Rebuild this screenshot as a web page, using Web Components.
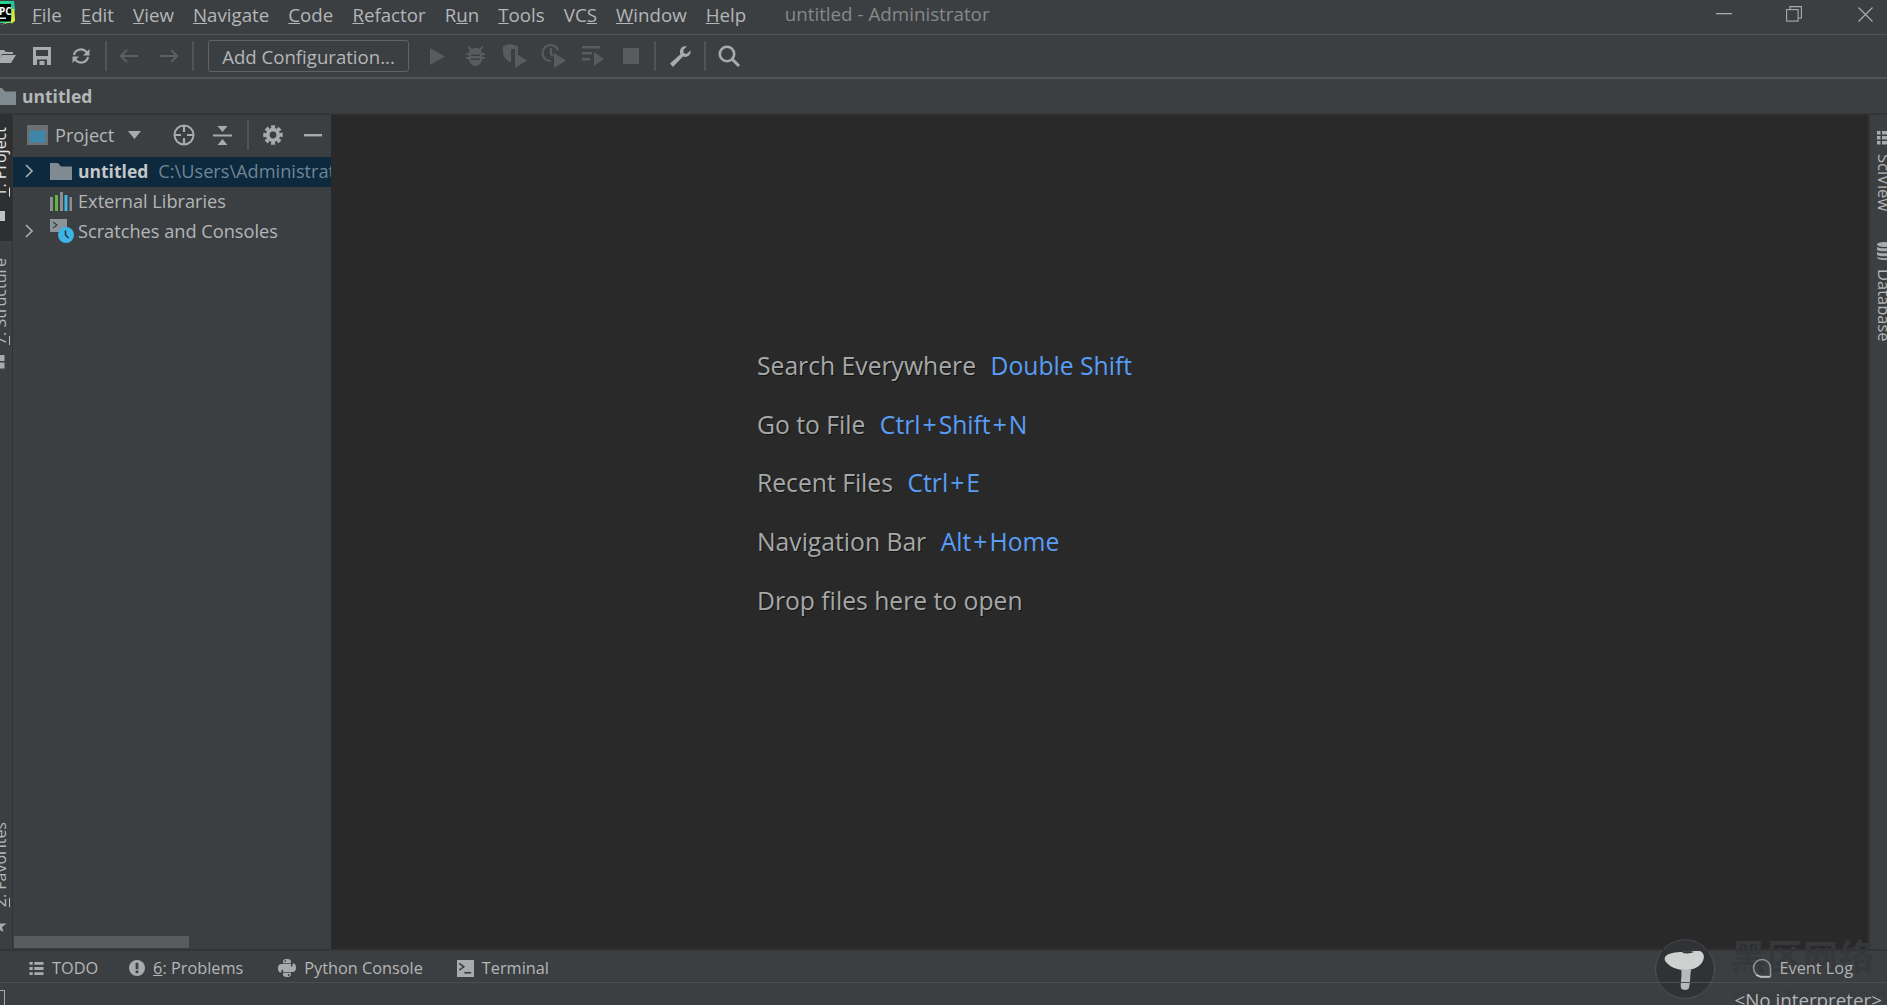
<!DOCTYPE html>
<html lang="en"><head><meta charset="utf-8"><title>untitled - Administrator</title>
<style>html,body{margin:0;padding:0;background:#3c3f41;overflow:hidden}</style></head>
<body>
<ide-app></ide-app>
<script>
const ICONS={
 logo:`<svg viewBox="0 0 16 26" width="16" height="26"><path d="M0 0h13l1 4v16l-3 2H0z" fill="#21d789"/><path d="M9 0h5l1 8-3 2z" fill="#27c2a0"/><path d="M0 24l15-4-1-9-3 9z" fill="#fcf84a"/><path d="M12 8l2.500 0 0 12-3 3z" fill="#d4e93a"/><rect x="-2" y="3" width="13" height="17.500" fill="#000"/><rect x="0" y="16.500" width="6" height="1.400" fill="#fff"/><text x="-1" y="14" font-family="Open Sans" font-weight="700" font-size="10" fill="#fff">PC</text></svg>`,
 open:`<svg viewBox="0 0 16 15" width="16" height="15"><path d="M-4 1h8l2 2h7v2H2L-2 14h-2z" fill="#a8aaac"/><path d="M-4 14L2 6h14l-5 8z" fill="#a8aaac"/></svg>`,
 save:`<svg viewBox="0 0 18 18" width="18" height="18"><path fill-rule="evenodd" fill="#a8aaac" d="M0 0h18v18H0zM3 3v6h12V3zM4 12.500v5.500h10v-5.500z"/><rect x="6.500" y="14" width="5" height="4" fill="#a8aaac"/></svg>`,
 sync:`<svg viewBox="0 0 18 18" width="18" height="18" fill="none" stroke="#a8aaac" stroke-width="2.200"><path d="M2 8a7 6.500 0 0 1 12-3.500L15.500 7"/><path d="M16 10a7 6.500 0 0 1-12 3.500L2.500 11"/><path d="M17.500 2v6.500H11z" fill="#a8aaac" stroke="none"/><path d="M.5 16v-6.500H7z" fill="#a8aaac" stroke="none"/></svg>`,
 back:`<svg viewBox="0 0 20 14" width="20" height="14" fill="none" stroke="#5d5f61" stroke-width="2"><path d="M19 7H2M8 1L2 7l6 6"/></svg>`,
 fwd:`<svg viewBox="0 0 20 14" width="20" height="14" fill="none" stroke="#5d5f61" stroke-width="2"><path d="M1 7h17M12 1l6 6-6 6"/></svg>`,
 play:`<svg viewBox="0 0 15 17" width="15" height="17"><path d="M0 0l15 8.500L0 17z" fill="#595b5d"/></svg>`,
 debug:`<svg viewBox="0 0 19 20" width="19" height="20"><path fill="#595b5d" d="M3 0l3 3a6 6 0 0 1 7 0l3-3 1.500 1.500L15 4.500c.6.7 1 1.500 1.200 2.500H19v2h-2.800v2H19v2h-2.800C15.500 17 13 20 9.500 20S3.500 17 2.800 13H0v-2h2.800V9H0V7h2.800C3 6 3.400 5.200 4 4.500L1.500 1.500z"/><path fill="#3c3f41" d="M5 8.500h9v1.600H5zM5 12.500h9v1.600H5z"/></svg>`,
 cover:`<svg viewBox="0 0 24 24" width="24" height="24"><path fill="#595b5d" d="M0 2l7-2 8 2v8h-3V5H8v13.500C3 16 0 13 0 8z"/><path fill="#595b5d" d="M12 9l12 7.500L12 24z"/></svg>`,
 profile:`<svg viewBox="0 0 24 24" width="24" height="24"><path fill="none" stroke="#595b5d" stroke-width="2.200" d="M9 17A8 8 0 1 1 16 6M9 4v6l2 2"/><path fill="#595b5d" d="M12 9l12 7.500L12 24z"/></svg>`,
 conc:`<svg viewBox="0 0 22 20" width="22" height="20"><path fill="#595b5d" d="M0 0h18v2.500H0zM0 6h10v2.500H0zM0 12h8v2.500H0zM12 6l10 7-10 7z"/></svg>`,
 stop:`<svg viewBox="0 0 16 16" width="16" height="16"><rect width="16" height="16" fill="#595b5d"/></svg>`,
 wrench:`<svg viewBox="0 0 21 21" width="21" height="21"><path fill="#a8aaac" d="M20.500 4.500l-4 3.500-3-1V3.500L17 .6C13.500-.8 9.500 2 10 6.500c0 .7.2 1.200.4 1.800L0 17.500 3 21l10-10.500c.7.3 1.500.4 2.300.4 3.400-.2 6-3.200 5.200-6.400z"/></svg>`,
 search:`<svg viewBox="0 0 22 22" width="22" height="22" fill="none" stroke="#a8aaac" stroke-width="2.600"><circle cx="9" cy="9" r="7.200"/><path d="M14 14l7 7" stroke-width="3"/></svg>`,
 folder:`<svg viewBox="0 0 22 17" width="22" height="17"><path fill="#7f8b91" d="M0 0h8l3 3.500h11V17H0z"/></svg>`,
 folderNav:`<svg viewBox="0 0 22 17" width="22" height="17"><path fill="#7f8b91" d="M0 0h8l3 3.500h11V17H0z"/></svg>`,
 project:`<svg viewBox="0 0 21 20" width="21" height="20"><rect width="21" height="20" fill="#6c7072"/><rect x="2.500" y="5.500" width="16" height="12" fill="#3f87a8"/></svg>`,
 caret:`<svg viewBox="0 0 13 8" width="13" height="8"><path d="M0 0h13L6.500 8z" fill="#a8aaac"/></svg>`,
 target:`<svg viewBox="0 0 22 22" width="22" height="22" fill="none" stroke="#a8aaac" stroke-width="2"><circle cx="11" cy="11" r="9.500"/><path d="M11 1v7M11 14v7M1 11h7M14 11h7" stroke-width="2.200"/></svg>`,
 collapse:`<svg viewBox="0 0 19 19" width="19" height="19"><path fill="#a8aaac" d="M4.500 0h10L9.500 6zM4.500 19h10l-5-6zM0 8.500h19v2H0z"/></svg>`,
 gear:`<svg viewBox="0 0 20 20" width="20" height="20" fill="none" stroke="#a8aaac"><circle cx="10" cy="10" r="5.300" stroke-width="3.800"/><circle cx="10" cy="10" r="8.300" stroke-width="3" stroke-dasharray="4 2.520" transform="rotate(-15 10 10)"/></svg>`,
 minus:`<svg viewBox="0 0 18 3" width="18" height="3"><rect width="18" height="2.400" fill="#a8aaac"/></svg>`,
 chev:`<svg viewBox="0 0 9 14" width="9" height="14" fill="none" stroke="#a8aaac" stroke-width="1.700"><path d="M1 1l6 6-6 6"/></svg>`,
 libs:`<svg viewBox="0 0 22 19" width="22" height="19"><rect x="0" y="5" width="3" height="14" fill="#8a8f92"/><rect x="5" y="3" width="3" height="16" fill="#62b543"/><rect x="10" y="0" width="3" height="19" fill="#8a8f92"/><rect x="14.500" y="3" width="3" height="16" fill="#40b6e0"/><rect x="19.500" y="5" width="2.500" height="14" fill="#8a8f92"/></svg>`,
 scratch:`<svg viewBox="0 0 24 24" width="24" height="24"><path fill="#8a9499" d="M0 0h17v13H0z"/><path d="M3 3l4 3-4 3" fill="none" stroke="#3c3f41" stroke-width="1.300"/><circle cx="16" cy="16" r="8" fill="#3cb4e6"/><path d="M15.500 11.500V16l3 3" fill="none" stroke="#2b2b2b" stroke-width="1.500"/></svg>`,
 todo:`<svg viewBox="0 0 13 12" width="15" height="13"><path fill="#a8aaac" d="M0 0h3v2.600H0zM4.500 0H13v2.600H4.500zM0 4.700h3v2.600H0zM4.500 4.700H13v2.600H4.500zM0 9.400h3V12H0zM4.500 9.400H13V12H4.500z"/></svg>`,
 problem:`<svg viewBox="0 0 14 14" width="16" height="16"><circle cx="7" cy="7" r="7" fill="#a8aaac"/><rect x="5.800" y="2.500" width="2.400" height="5.500" fill="#3c3f41"/><rect x="5.800" y="9.200" width="2.400" height="2.300" fill="#3c3f41"/></svg>`,
 python:`<svg viewBox="0 0 16 16" width="18" height="18"><path fill="#a8aaac" d="M3 3.700h8.500V2C11.500.6 10 0 8 0S4.500.5 4.500 2v1.700zM0 8c0-2 1-3.500 3-3.500h8.500V7C11.500 8 11 9 9.500 9H5c-1.500 0-2 1-2 2v1H2C.5 12 0 10 0 8z"/><path fill="#a8aaac" d="M13 12.300H4.500V14c0 1.400 1.500 2 3.500 2s3.500-.5 3.500-2v-1.700zM16 8c0 2-1 3.500-3 3.500H4.500V9C4.500 8 5 7 6.500 7H11c1.500 0 2-1 2-2V4h1c1.500 0 2 2 2 4z"/><circle cx="6.500" cy="1.800" r=".8" fill="#3c3f41"/><circle cx="9.500" cy="14.200" r=".8" fill="#3c3f41"/></svg>`,
 terminal:`<svg viewBox="0 0 15 15" width="17" height="17"><rect width="15" height="15" fill="#a8aaac"/><path d="M2 3l4 3-4 3" fill="none" stroke="#3c3f41" stroke-width="1.400"/><rect x="6.500" y="10.500" width="6" height="1.500" fill="#3c3f41"/></svg>`,
 sci:`<svg viewBox="0 0 14 14" width="14" height="14"><path fill="#a8aaac" d="M0 0h3.500v3.500H0zM5 0h9v3.500H5zM0 5h3.500v3.500H0zM5 5h9v3.500H5zM0 10h3.500v3.500H0zM5 10h9v3.500H5z"/></svg>`,
 db:`<svg viewBox="0 0 14 18" width="14" height="18" fill="#a8aaac"><ellipse cx="7" cy="2.500" rx="7" ry="2.500"/><path d="M0 5c2 1.800 12 1.800 14 0v3c-2 1.800-12 1.800-14 0zM0 10c2 1.800 12 1.800 14 0v3c-2 1.800-12 1.800-14 0zM0 15c2 1.500 12 1.500 14 0c0 2-3 3-7 3s-7-1-7-3z"/></svg>`,
 projStripe:`<svg viewBox="0 0 12 10" width="12" height="10"><rect x="-6" y="0" width="11" height="10" fill="#c0c2c4"/></svg>`,
 structStripe:`<svg viewBox="0 0 12 14" width="12" height="14"><path fill="#a8aaac" d="M-6 0H4.500v6H-6zM-6 7.500H4.500v6H-6z"/></svg>`,
 star:`<svg viewBox="0 0 12 12" width="12" height="12"><path fill="#a8aaac" d="M-3 0l1 3.500L6.500 3.500 2 7l1.500 5L-2 9z"/></svg>`,
 winMin:`<svg viewBox="0 0 16 2" width="16" height="2"><rect width="16" height="1.300" fill="#a8aaac"/></svg>`,
 winRes:`<svg viewBox="0 0 16 16" width="16" height="16" fill="none" stroke="#a8aaac" stroke-width="1.100"><rect x=".6" y="3.600" width="11.500" height="11.500"/><path d="M4 3.500V.6h11.400V12H12.300"/></svg>`,
 winClose:`<svg viewBox="0 0 15 15" width="15" height="15" fill="none" stroke="#a8aaac" stroke-width="1.200"><path d="M.5.500l14 14M14.500.500l-14 14"/></svg>`,
 log:`<svg viewBox="0 0 20 20" width="20" height="20" fill="none"><path d="M1.500 10a8.500 8.500 0 0 1 17 0v8.500H10A8.500 8.500 0 0 1 1.500 10z" stroke="#8f9294" stroke-width="1.600"/><path d="M4 17l5 2h9" stroke="#c4c6c8" stroke-width="1.400"/></svg>`,
 mushroom:`<svg viewBox="0 0 60 60" width="60" height="60"><circle cx="30" cy="30" r="29.300" fill="#303235" stroke="#6f7173" stroke-width=".7" stroke-dasharray="1.500 1"/><path d="M10 18c2-4 12-5 17-5s14-2 18-1c5 2 5 8 1 13-4 4-9 6-15 6-7 0-14-2-18-6-3-2-4-5-3-7z" fill="#cfd1d1"/><path d="M27 13.500c4-1.500 10-1.800 12-.5-3 1.500-9 2-12 .5z" fill="#303235"/><path d="M26 30l10 1c-1 5-.5 12-2 18-1 2.500-7 2.500-8 0-1-5 1.500-12 0-19z" fill="#b6b8ba"/></svg>`
};
class Base extends HTMLElement{
 constructor(){super();this.attachShadow({mode:'open'}).innerHTML=this.constructor.html(this);}
}
const FONT=`"Open Sans","Noto Sans",sans-serif`;
customElements.define('ide-icon',class extends HTMLElement{
 connectedCallback(){ if(this.shadowRoot)return; this.attachShadow({mode:'open'}).innerHTML=`<style>:host{display:inline-flex;align-items:center;justify-content:center;flex:none;line-height:0}svg{display:block;overflow:visible}</style>${ICONS[this.getAttribute('name')]||''}`; }
});
customElements.define('menu-item',class extends Base{static html(){return `<style>:host{display:inline-block;white-space:nowrap}</style><slot></slot>`}});
customElements.define('v-sep',class extends Base{static html(){return `<style>:host{display:block;width:2px;height:30px;background:#515355;flex:none}</style>`}});

customElements.define('title-bar',class extends Base{static html(){return `<style>
:host{display:flex;align-items:center;height:35px;box-sizing:border-box;padding-bottom:6px;flex:none;border-bottom:1px solid #515355;font:18.700px ${FONT};color:#b4b6b8;overflow:hidden;position:relative}
nav{display:flex;margin-left:-3px;align-items:center}
ide-icon{margin-top:-1px}
menu-item{margin-left:19.100px}
.t{margin-left:38.500px;color:#87898b;font-size:18.800px}
.w{margin-left:auto;display:flex;align-items:center}
.w ide-icon{margin-top:0}
</style>
<ide-icon name="logo"></ide-icon>
<nav>
<menu-item><u>F</u>ile</menu-item><menu-item><u>E</u>dit</menu-item><menu-item><u>V</u>iew</menu-item><menu-item><u>N</u>avigate</menu-item><menu-item><u>C</u>ode</menu-item><menu-item><u>R</u>efactor</menu-item><menu-item>R<u>u</u>n</menu-item><menu-item><u>T</u>ools</menu-item><menu-item>VC<u>S</u></menu-item><menu-item><u>W</u>indow</menu-item><menu-item><u>H</u>elp</menu-item>
</nav>
<span class="t">untitled - Administrator</span>
<div class="w"><ide-icon name="winMin" style="margin-right:54px"></ide-icon><ide-icon name="winRes" style="margin-right:56px"></ide-icon><ide-icon name="winClose" style="margin-right:14px"></ide-icon></div>`}});

customElements.define('tool-bar',class extends Base{static html(){return `<style>
:host{display:flex;align-items:center;height:42px;flex:none;border-bottom:2px solid #515355;box-sizing:content-box;overflow:hidden}
.cfg{margin-left:14px;box-sizing:border-box;width:201px;height:32px;border:1.500px solid #606264;border-radius:3px;color:#b4b6b8;font:18.600px ${FONT};display:flex;align-items:center;justify-content:center;white-space:nowrap}
</style>
<ide-icon name="open" style="margin-left:0"></ide-icon>
<ide-icon name="save" style="margin-left:17px"></ide-icon>
<ide-icon name="sync" style="margin-left:21px"></ide-icon>
<v-sep style="margin-left:15px"></v-sep>
<ide-icon name="back" style="margin-left:12px"></ide-icon>
<ide-icon name="fwd" style="margin-left:20px"></ide-icon>
<v-sep style="margin-left:13px"></v-sep>
<div class="cfg">Add Configuration...</div>
<ide-icon name="play" style="margin-left:21px"></ide-icon>
<ide-icon name="debug" style="margin-left:21px"></ide-icon>
<ide-icon name="cover" style="margin-left:18px"></ide-icon>
<ide-icon name="profile" style="margin-left:15px"></ide-icon>
<ide-icon name="conc" style="margin-left:16px"></ide-icon>
<ide-icon name="stop" style="margin-left:19px"></ide-icon>
<v-sep style="margin-left:15px"></v-sep>
<ide-icon name="wrench" style="margin-left:14px"></ide-icon>
<v-sep style="margin-left:13px"></v-sep>
<ide-icon name="search" style="margin-left:12px"></ide-icon>`}});

customElements.define('nav-bar',class extends Base{static html(){return `<style>
:host{display:flex;align-items:center;height:34px;flex:none;border-bottom:2px solid #323436;overflow:hidden;font:700 17.500px ${FONT};color:#b4b6b8}
ide-icon{margin-left:-6px;margin-right:6px}
</style><ide-icon name="folderNav"></ide-icon><slot></slot>`}});

customElements.define('left-stripe',class extends Base{static html(){return `<style>
:host{display:flex;flex-direction:column;width:25px;margin-left:-13px;flex:none;border-right:1px solid #323436;font:16px ${FONT};color:#b4b6b8;overflow:hidden}
.g{display:flex;flex-direction:column;align-items:center;flex:none}
.sel{height:126px;background:#2d2f30;color:#e4e6e8;padding-top:12px;box-sizing:border-box}
span{writing-mode:vertical-rl;transform:rotate(180deg);white-space:nowrap;line-height:24px}
ide-icon{align-self:flex-start;margin-left:13px;width:12px;justify-content:flex-start}
.v{margin-top:auto;margin-bottom:17px}
</style>
<div class="g sel"><span><u>1</u>: Project</span><ide-icon name="projStripe" style="margin-top:14px"></ide-icon></div>
<div class="g" style="margin-top:17px"><span><u>7</u>: Structure</span><ide-icon name="structStripe" style="margin-top:10px"></ide-icon></div>
<div class="g v"><span><u>2</u>: Favorites</span><ide-icon name="star" style="margin-top:13px"></ide-icon></div>`}});

customElements.define('tree-row',class extends Base{static html(h){
 const sel=h.hasAttribute('selected'), chev=h.hasAttribute('chevron');
 return `<style>
:host{display:flex;align-items:center;height:30px;box-sizing:border-box;padding-bottom:2px;flex:none;white-space:nowrap;overflow:hidden;${sel?'background:#0d293e;':''}}
.c{width:37px;padding-left:12px;box-sizing:border-box;flex:none;display:flex}
.i{width:28px;flex:none;display:flex;align-items:center}
</style><div class="c">${chev?'<ide-icon name="chev"></ide-icon>':''}</div><div class="i"><ide-icon name="${h.getAttribute('icon')}"></ide-icon></div><slot></slot>`}});

customElements.define('project-panel',class extends Base{static html(){return `<style>
:host{display:flex;flex-direction:column;width:318px;flex:none;font:18.200px ${FONT};color:#b4b6b8;position:relative;overflow:hidden}
header{display:flex;align-items:center;height:42px;flex:none;box-sizing:border-box;padding-bottom:2px}
.n{margin-left:7px}
b{font-weight:700;color:#c4c6c8;font-size:17.500px}
.p{color:#6f8596;margin-left:10px}
.sb{margin-top:auto;margin-bottom:1px;margin-left:1px;width:175px;height:12px;background:#595b5d;flex:none}
.rows{display:flex;flex-direction:column}
</style>
<header>
<ide-icon name="project" style="margin-left:14px"></ide-icon><span class="n">Project</span>
<ide-icon name="caret" style="margin-left:14px"></ide-icon>
<ide-icon name="target" style="margin-left:32px"></ide-icon>
<ide-icon name="collapse" style="margin-left:18px"></ide-icon>
<v-sep style="margin-left:15px;height:30px"></v-sep>
<ide-icon name="gear" style="margin-left:14px"></ide-icon>
<ide-icon name="minus" style="margin-left:21px"></ide-icon>
</header>
<div class="rows">
<tree-row selected chevron icon="folder"><b>untitled</b><span class="p">C:\\Users\\Administrator\\PycharmProjects\\untitled</span></tree-row>
<tree-row icon="libs">External Libraries</tree-row>
<tree-row chevron icon="scratch">Scratches and Consoles</tree-row>
</div>
<div class="sb"></div>`}});

customElements.define('hint-row',class extends Base{static html(h){
 const k=h.getAttribute('k');
 return `<style>
:host{display:flex;gap:14.500px;height:58.700px;align-items:center;flex:none;white-space:nowrap;color:#a6a8a8;text-shadow:1px 1px 0 #141414}
.k{color:#589df6;text-shadow:none}
.k i{font-style:normal;margin:0 2px}
</style><slot></slot>${k?`<span class="k">${k.split('+').join('<i>+</i>')}</span>`:''}`}});

customElements.define('editor-pane',class extends Base{static html(){return `<style>
:host{display:flex;flex-direction:column;flex:1;min-width:0;background:#292929;padding:221px 0 0 426px;box-sizing:border-box;font:24.700px ${FONT}}
</style>
<hint-row k="Double Shift">Search Everywhere</hint-row>
<hint-row k="Ctrl+Shift+N">Go to File</hint-row>
<hint-row k="Ctrl+E">Recent Files</hint-row>
<hint-row k="Alt+Home">Navigation Bar</hint-row>
<hint-row>Drop files here to open</hint-row>`}});

customElements.define('right-stripe',class extends Base{static html(){return `<style>
:host{display:flex;flex-direction:column;width:19px;flex:none;border-left:2px solid #323436;padding:16px 0 0 7px;box-sizing:border-box;font:16.500px ${FONT};color:#b4b6b8;overflow:hidden}
span{writing-mode:vertical-rl;white-space:nowrap;line-height:26px;width:26px;align-self:flex-start;margin-left:-6px}
ide-icon{justify-content:flex-start;width:14px}
</style>
<ide-icon name="sci"></ide-icon><span style="margin-top:9px">SciView</span>
<ide-icon name="db" style="margin-top:31px"></ide-icon><span style="margin-top:9px">Database</span>`}});

customElements.define('tool-tab',class extends Base{static html(h){return `<style>
:host{display:inline-flex;align-items:center;gap:8px;white-space:nowrap;flex:none}
</style><ide-icon name="${h.getAttribute('icon')}"></ide-icon><slot></slot>`}});

customElements.define('bottom-bar',class extends Base{static html(){return `<style>
:host{display:flex;align-items:center;height:34px;flex:none;border-top:2px solid #323436;border-bottom:1px solid #4b4d4f;box-sizing:border-box;font:16.300px ${FONT};color:#b4b6b8;padding-top:3px;position:relative;z-index:1}
.e{margin-left:auto;margin-right:34px;color:#b0b2b4}
</style>
<tool-tab icon="todo" style="margin-left:29px">TODO</tool-tab>
<tool-tab icon="problem" style="margin-left:31px"><span><u>6</u>: Problems</span></tool-tab>
<tool-tab icon="python"  style="margin-left:35px">Python Console</tool-tab>
<tool-tab icon="terminal" style="margin-left:34px">Terminal</tool-tab>
<tool-tab class="e" icon="log">Event Log</tool-tab>`}});

customElements.define('status-bar',class extends Base{static html(){return `<style>
:host{display:flex;align-items:flex-start;flex:1;min-height:0;overflow:hidden;font:18.800px ${FONT};color:#b4b6b8;white-space:nowrap;position:relative;z-index:1}
i{display:block;width:15px;height:16px;margin:7px 0 0 -10px;border:1.500px solid #a8aaac;box-sizing:border-box}
span{margin-left:auto;margin-right:5px;line-height:24px;margin-top:5px}
</style><i></i><span>&lt;No interpreter&gt;</span>`}});

customElements.define('water-mark',class extends Base{static html(){return `<style>
:host{position:absolute;left:1655px;top:939px;width:232px;height:66px;pointer-events:none;z-index:0}
ide-icon{position:absolute;left:0;top:0}
b{position:absolute;left:76px;top:-9px;font:700 35px "Noto Sans CJK SC",sans-serif;color:#36383b;letter-spacing:1px;white-space:nowrap;line-height:50px}
s{position:absolute;left:78px;top:44px;text-decoration:none;font:700 15px ${FONT};color:#393b3d;letter-spacing:2.600px;white-space:nowrap}
</style><b>黑区网络</b><s>www.heiqu.com</s><ide-icon name="mushroom"></ide-icon>`}});

customElements.define('ide-app',class extends Base{static html(){return `<style>
:host{display:flex;flex-direction:column;width:1887px;height:1005px;overflow:hidden;background:#3c3f41;position:relative}
main{display:flex;flex:none;height:834px;min-height:0;overflow:hidden}
</style>
<title-bar></title-bar>
<tool-bar></tool-bar>
<nav-bar>untitled</nav-bar>
<main><left-stripe></left-stripe><project-panel></project-panel><editor-pane></editor-pane><right-stripe></right-stripe></main>
<bottom-bar></bottom-bar>
<status-bar></status-bar>
<water-mark></water-mark>`}});
</script>
</body></html>
